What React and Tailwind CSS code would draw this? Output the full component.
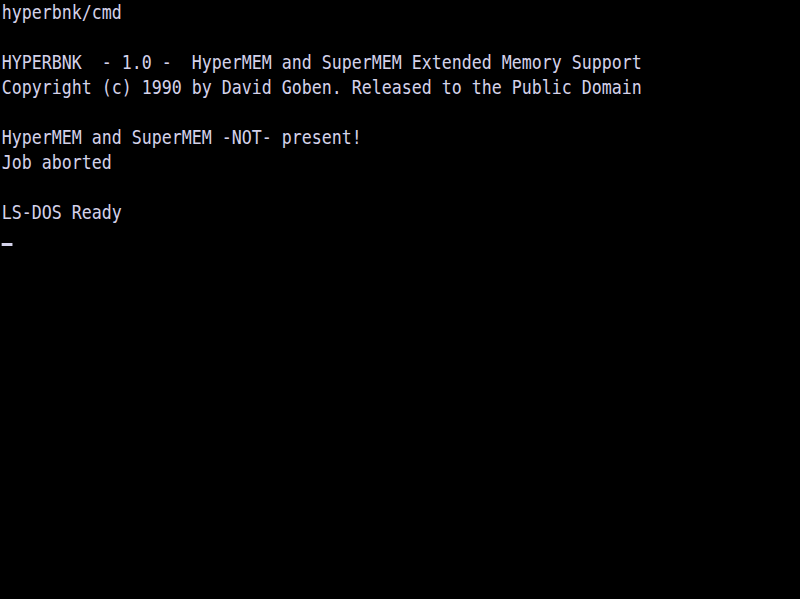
const lines = [
  'hyperbnk/cmd',
  '',
  'HYPERBNK  - 1.0 -  HyperMEM and SuperMEM Extended Memory Support',
  'Copyright (c) 1990 by David Goben. Released to the Public Domain',
  '',
  'HyperMEM and SuperMEM -NOT- present!',
  'Job aborted',
  '',
  'LS-DOS Ready',
];

export default function App() {
  return (
    <div className="w-[800px] h-[599px] bg-black overflow-hidden">
      <div
        className="w-[963px] pl-[2px] origin-top-left scale-x-[0.8306] text-[#d4d2ea] text-[20px] leading-[24.96px] whitespace-pre"
        style={{ fontFamily: '"DejaVu Sans Mono", "Liberation Mono", monospace' }}
      >
        {lines.map((line, i) => (
          <div key={i} className="h-[24.96px]">
            {line}
          </div>
        ))}
        <div className="h-[24.96px] flex items-end pb-[4px]">
          <div className="w-[13px] h-[3px] bg-[#d4d2ea]" />
        </div>
      </div>
    </div>
  );
}
